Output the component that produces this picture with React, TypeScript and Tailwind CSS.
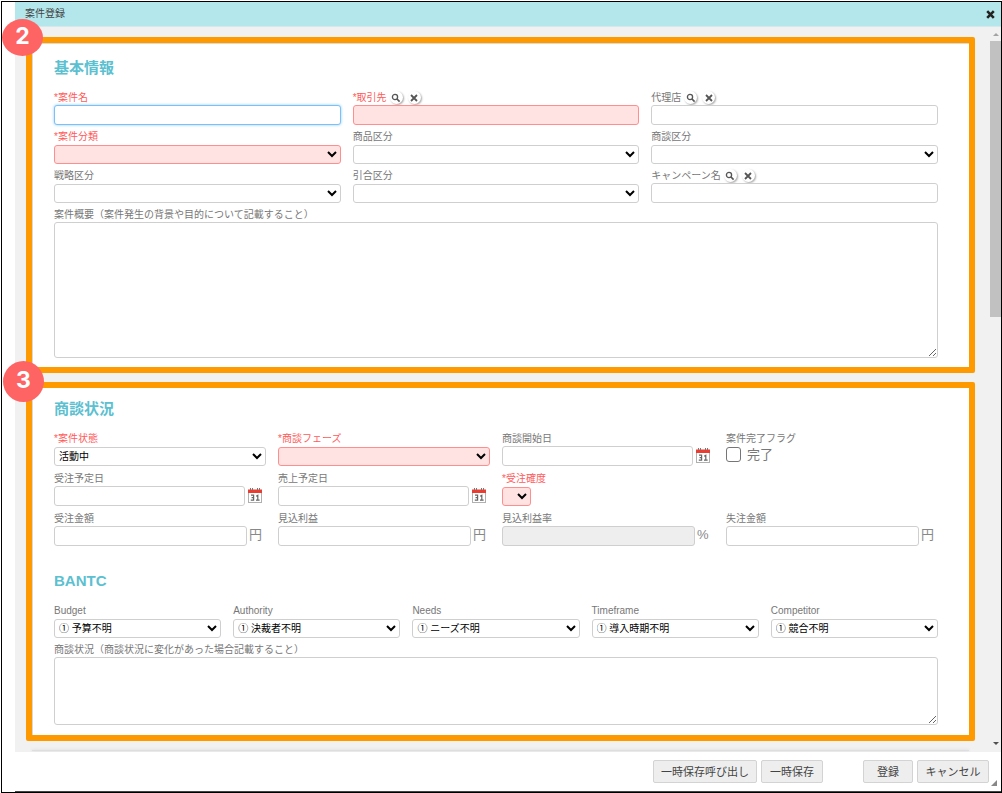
import type { ReactNode } from "react";

const control = "w-full min-w-0 rounded-[3px] border text-[10px]";
const normal = "border-[#cfcfcf] bg-white";
const required = "border-[#ff8f8f] bg-[#ffe3e3]";

type FieldProps = {
  id: string;
  label: string;
  required?: boolean;
  lookup?: boolean;
  children: ReactNode;
};

function Field({ id, label, required: isRequired, lookup, children }: FieldProps) {
  return (
    <div className="min-w-0">
      <div className="flex h-[19px] items-center gap-[3px] pt-1">
        <label
          htmlFor={id}
          className={`whitespace-nowrap leading-[15px] ${isRequired ? "text-[#ff5a5a]" : "text-[#777]"}`}
        >
          {isRequired ? "*" : ""}
          {label}
        </label>
        {lookup && (
          <>
            <RoundButton label={`${label}を検索`}>
              <circle cx="5" cy="5" r="2.6" strokeWidth="1.3" />
              <path d="M7 7 9.6 9.6" strokeWidth="1.7" />
            </RoundButton>
            <RoundButton label={`${label}をクリア`}>
              <path d="M3 3 9 9M9 3 3 9" strokeWidth="1.8" />
            </RoundButton>
          </>
        )}
      </div>
      <div className="flex h-5 items-start">{children}</div>
    </div>
  );
}

function RoundButton({ label, children }: { label: string; children: ReactNode }) {
  return (
    <button
      type="button"
      aria-label={label}
      className="mr-0.5 flex size-[13px] items-center justify-center rounded-full bg-white shadow-[1px_1px_2px_rgba(0,0,0,0.35)]"
    >
      <svg viewBox="0 0 12 12" className="size-3 fill-none stroke-[#555]">
        {children}
      </svg>
    </button>
  );
}

function Text({ id, tone = normal }: { id: string; tone?: string }) {
  return <input id={id} type="text" className={`${control} h-5 px-1 ${tone}`} />;
}

function Select({ id, tone = normal, value = "" }: { id: string; tone?: string; value?: string }) {
  return (
    <select id={id} className={`${control} mt-px h-[19px] text-black ${tone}`}>
      <option>{value}</option>
    </select>
  );
}

function DateInput({ id, label }: { id: string; label: string }) {
  return (
    <div className="flex w-full items-start gap-[3px] pr-1">
      <Text id={id} />
      <button type="button" aria-label={`${label}のカレンダー`} className="mt-0.5 shrink-0">
        <svg viewBox="0 0 14 15" className="block h-[15px] w-3.5">
          <rect x="0.5" y="2.5" width="13" height="12" fill="#fff" stroke="#b0b0b0" />
          <path d="M0 1.5h14V5H0z" fill="#ea3c30" />
          <path d="M2 0h1v2H2zM4 0h1v2H4zM9 0h1v2H9zM11 0h1v2h-1z" fill="#777" />
          <path
            d="M3 7.2h2.6v4.9H2.8M3.6 9.6h2M8.2 8.2l1.6-.9v4.8M8 12.1h3.6"
            fill="none"
            stroke="#666"
            strokeWidth="1.2"
          />
        </svg>
      </button>
    </div>
  );
}

function Amount({ id, unit = "円", disabled = false }: { id: string; unit?: string; disabled?: boolean }) {
  return (
    <div className="flex w-full items-start gap-0.5 pr-1">
      <input
        id={id}
        type="text"
        disabled={disabled}
        className={`${control} h-5 border-[#cfcfcf] px-1 ${disabled ? "bg-[#eeeeee]" : "bg-white"}`}
      />
      <span className="w-[13px] shrink-0 text-[13px] leading-[18px] text-[#888]">{unit}</span>
    </div>
  );
}

type PanelProps = { number: number; badge: string; className: string; children: ReactNode };

function Panel({ number, badge, className, children }: PanelProps) {
  return (
    <section className={`relative rounded-[2px] border-6 border-[#ff9900] bg-white pr-[31px] pl-[22px] ${className}`}>
      <span
        className={`absolute flex w-[41px] justify-center rounded-[50%] bg-[#ff6464] font-['Inter',sans-serif] text-[23px] font-bold text-white ${badge}`}
      >
        {number}
      </span>
      {children}
    </section>
  );
}

const heading = "pb-2 text-[15px] leading-5 font-bold text-[#5bc0d0]";
const footerButton =
  "h-[23px] rounded-[2px] border border-[#d3d3d3] bg-[#eeeeee] text-[11px] leading-4 text-[#444] whitespace-nowrap";

const bantc = [
  ["Budget", "① 予算不明"],
  ["Authority", "① 決裁者不明"],
  ["Needs", "① ニーズ不明"],
  ["Timeframe", "① 導入時期不明"],
  ["Competitor", "① 競合不明"],
];

export default function App() {
  return (
    <div className="flex min-h-screen flex-col bg-white pt-px pl-px font-['Liberation_Sans','Noto_Sans_CJK_JP',sans-serif] text-[10px]">
      <div className="flex flex-1 flex-col border border-black pl-[13px]">
        <header className="flex h-[25px] items-center justify-between border-b border-[#d4e9ec] bg-[#b3e7ec] pr-1.5 pl-2.5">
          <h1 className="text-[10px] leading-4 text-[#444]">案件登録</h1>
          <button type="button" aria-label="閉じる">
            <svg viewBox="0 0 9 9" className="size-[9px] stroke-[#222]" strokeWidth="2.6">
              <path d="M1.2 1.2 7.8 7.8M7.8 1.2 1.2 7.8" />
            </svg>
          </button>
        </header>

        <div className="flex flex-1 bg-[#f1f1f1]">
          <main className="flex min-w-0 flex-1 flex-col gap-[9px] pt-2.5 pr-[15px] pl-[11px]">
            <Panel
              number={2}
              badge="-top-6 -left-[30px] h-[37px] leading-[34px]"
              className="pt-[15px] pb-[9px] shadow-[inset_1px_1px_0_#d9d9d9]"
            >
              <h2 className={heading}>基本情報</h2>
              <div className="grid grid-cols-3 gap-x-3">
                <Field id="name" label="案件名" required>
                  <Text id="name" tone="border-[#7cc0f8] bg-white shadow-[0_0_3px_#8ecbff]" />
                </Field>
                <Field id="client" label="取引先" required lookup>
                  <Text id="client" tone={required} />
                </Field>
                <Field id="agency" label="代理店" lookup>
                  <Text id="agency" />
                </Field>
                <Field id="category" label="案件分類" required>
                  <Select id="category" tone={required} />
                </Field>
                <Field id="product" label="商品区分">
                  <Select id="product" />
                </Field>
                <Field id="deal" label="商談区分">
                  <Select id="deal" />
                </Field>
                <Field id="strategy" label="戦略区分">
                  <Select id="strategy" />
                </Field>
                <Field id="inquiry" label="引合区分">
                  <Select id="inquiry" />
                </Field>
                <Field id="campaign" label="キャンペーン名" lookup>
                  <Text id="campaign" />
                </Field>
              </div>
              <label htmlFor="summary" className="block h-[19px] pt-1 leading-[15px] text-[#777]">
                案件概要（案件発生の背景や目的について記載すること）
              </label>
              <textarea id="summary" className={`block h-[136px] resize-y ${control} ${normal}`} />
            </Panel>

            <Panel
              number={3}
              badge="-top-[27px] -left-[29px] h-[41px] leading-[38px]"
              className="pt-[11px] pb-2.5 shadow-[inset_1px_0_0_#d9d9d9]"
            >
              <h2 className={heading}>商談状況</h2>
              <div className="grid grid-cols-4 gap-x-3 gap-y-px">
                <Field id="state" label="案件状態" required>
                  <Select id="state" value="活動中" />
                </Field>
                <Field id="phase" label="商談フェーズ" required>
                  <Select id="phase" tone={required} />
                </Field>
                <Field id="start" label="商談開始日">
                  <DateInput id="start" label="商談開始日" />
                </Field>
                <Field id="done" label="案件完了フラグ">
                  <input
                    id="done"
                    type="checkbox"
                    className="mt-px size-[15px] appearance-none rounded-[3px] border border-[#767676] bg-white checked:bg-[#5bc0d0]"
                  />
                  <label htmlFor="done" className="pl-1.5 text-[13px] leading-[18px] text-[#777]">
                    完了
                  </label>
                </Field>
                <Field id="orderDate" label="受注予定日">
                  <DateInput id="orderDate" label="受注予定日" />
                </Field>
                <Field id="salesDate" label="売上予定日">
                  <DateInput id="salesDate" label="売上予定日" />
                </Field>
                <Field id="accuracy" label="受注確度" required>
                  <div className="flex w-[29px]">
                    <Select id="accuracy" tone={required} />
                  </div>
                </Field>
                <div />
                <Field id="order" label="受注金額">
                  <Amount id="order" />
                </Field>
                <Field id="profit" label="見込利益">
                  <Amount id="profit" />
                </Field>
                <Field id="rate" label="見込利益率">
                  <Amount id="rate" unit="%" disabled />
                </Field>
                <Field id="lost" label="失注金額">
                  <Amount id="lost" />
                </Field>
              </div>

              <h2 className={`pt-[25px] ${heading}`}>BANTC</h2>
              <div className="grid grid-cols-5 gap-x-3">
                {bantc.map(([label, value]) => (
                  <Field key={label} id={label} label={label}>
                    <Select id={label} value={value} />
                  </Field>
                ))}
              </div>
              <label htmlFor="status" className="block h-[19px] pt-1 leading-[15px] text-[#777]">
                商談状況（商談状況に変化があった場合記載すること）
              </label>
              <textarea id="status" className={`block h-[68px] resize-y ${control} ${normal}`} />
            </Panel>
            <div className="mx-1.5 h-px bg-[#dedede] shadow-[0_0_3px_#ccc]" />
          </main>

          <div aria-hidden="true" className="flex w-[11px] flex-col items-center justify-between bg-[#f1f1f1]">
            <div className="flex w-full flex-col items-center">
              <svg viewBox="0 0 6 14" className="h-3.5 w-1.5 fill-[#a3a3a3]">
                <path d="M0 9 3 6 6 9z" />
              </svg>
              <div className="h-[276px] w-full bg-[#c1c1c1]" />
            </div>
            <svg viewBox="0 0 6 16" className="h-4 w-1.5 fill-[#505050]">
              <path d="M0 6 3 9 6 6z" />
            </svg>
          </div>
        </div>

        <footer className="relative flex h-10 items-center justify-end gap-1 border-b border-[#444] bg-white pr-3">
          <button type="button" className={`${footerButton} w-[104px]`}>一時保存呼び出し</button>
          <button type="button" className={`${footerButton} mr-9 w-[62px]`}>一時保存</button>
          <button type="button" className={`${footerButton} w-[50px]`}>登録</button>
          <button type="button" className={`${footerButton} w-[72px]`}>キャンセル</button>
          <svg viewBox="0 0 6 6" className="absolute right-1 bottom-[5px] size-1.5 fill-[#888]">
            <path d="M6 0v6H0z" />
          </svg>
        </footer>
      </div>
    </div>
  );
}
